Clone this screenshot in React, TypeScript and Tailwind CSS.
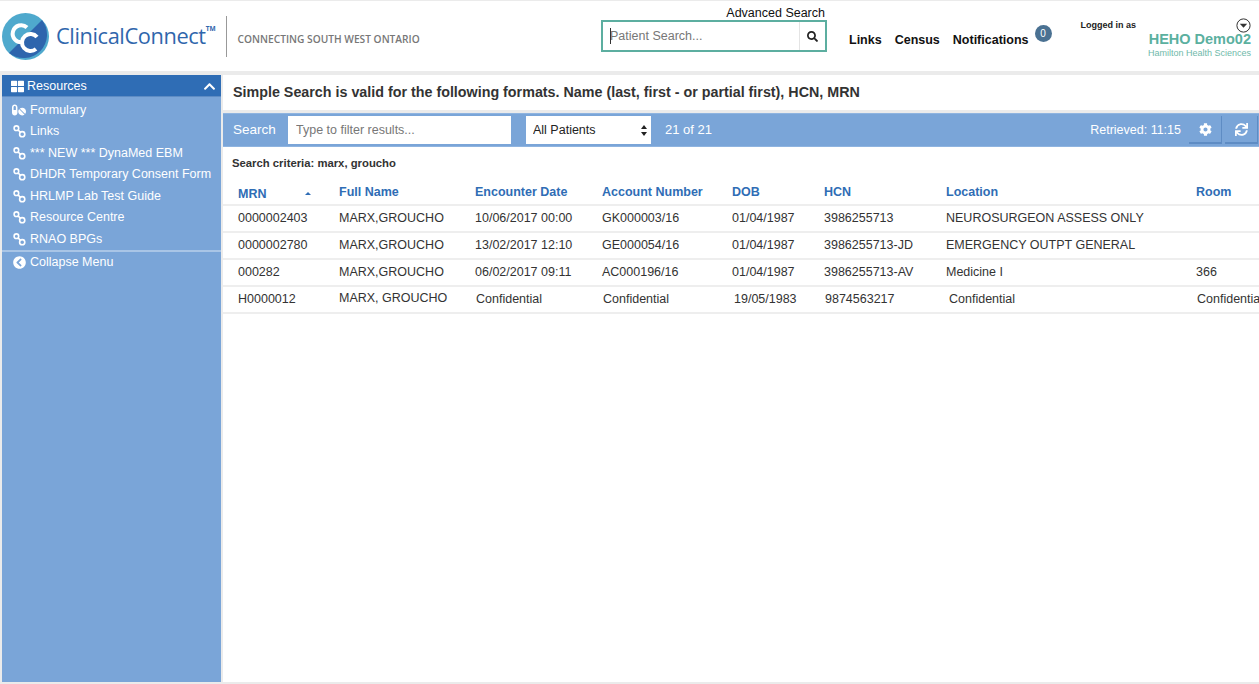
import React from 'react';
import { FaThLarge, FaChevronUp, FaPills, FaChevronCircleLeft, FaCog, FaSync, FaSearch } from 'react-icons/fa';

const columns = 'grid grid-cols-[101px_136px_127px_130px_92px_122px_250px_60px]';

const resources = [
  '*** NEW *** DynaMed EBM',
  'DHDR Temporary Consent Form',
  'HRLMP Lab Test Guide',
  'Resource Centre',
  'RNAO BPGs',
];

const rows = [
  ['0000002403', 'MARX,GROUCHO', '10/06/2017 00:00', 'GK000003/16', '01/04/1987', '3986255713', 'NEUROSURGEON ASSESS ONLY', ''],
  ['0000002780', 'MARX,GROUCHO', '13/02/2017 12:10', 'GE000054/16', '01/04/1987', '3986255713-JD', 'EMERGENCY OUTPT GENERAL', ''],
  ['000282', 'MARX,GROUCHO', '06/02/2017 09:11', 'AC000196/16', '01/04/1987', '3986255713-AV', 'Medicine I', '366'],
];

function ChainIcon() {
  return (
    <svg width="13" height="13" viewBox="0 0 13 13" fill="none" stroke="white" strokeWidth="1.6" className="shrink-0">
      <circle cx="3.4" cy="3.2" r="2.3" />
      <circle cx="9.2" cy="9.2" r="2.6" />
      <path d="M5 4.8 L7.4 7.4" />
    </svg>
  );
}

function Logo() {
  return (
    <svg width="47" height="47" viewBox="0 0 47 47" className="shrink-0">
      <circle cx="23.5" cy="23.5" r="23.5" fill="#4fa9cd" />
      <path d="M7 40 A23.5 23.5 0 0 0 40 7 Z" fill="#2e65ad" />
      <path d="M25 14.5 A8.5 8.5 0 1 0 21 29" fill="none" stroke="white" strokeWidth="4" />
      <path d="M35 24 A8.5 8.5 0 1 0 34 36" fill="none" stroke="white" strokeWidth="4" />
    </svg>
  );
}

function MenuItem({ label, icon }: { label: string; icon: React.ReactNode }) {
  return (
    <div className="flex h-[21.5px] items-center gap-[4px] pl-[10px] text-white">
      <span className="flex w-[14px] justify-center">{icon}</span>
      <span>{label}</span>
    </div>
  );
}

export default function App() {
  return (
    <div className="flex h-[684px] w-[1259px] flex-col overflow-hidden bg-[#ebebeb] font-['Liberation_Sans',Arial,sans-serif] text-[12.5px] text-[#333]">
      <header className="mt-px flex h-[70px] shrink-0 bg-white">
        <div className="flex w-[601px] shrink-0 items-start pl-[2px] pt-[12px]">
          <Logo />
          <div className="ml-[7px] mt-[8px] whitespace-nowrap font-['Open_Sans',sans-serif] text-[21.8px] font-medium leading-[30px] tracking-[-0.4px] text-[#2f66ac]">ClinicalConnect</div>
          <div className="mt-[11px] font-['Open_Sans',sans-serif] text-[6.5px] font-bold leading-[10px] text-[#2f66ac]">TM</div>
          <div className="ml-[10px] mt-[3px] h-[41px] w-px bg-[#999]"></div>
          <div className="ml-[11px] mt-[20px] whitespace-nowrap font-['Open_Sans',sans-serif] text-[10.2px] font-semibold leading-[13px] text-[#777]">CONNECTING SOUTH WEST ONTARIO</div>
        </div>

        <div className="flex w-[226px] shrink-0 flex-col">
          <div className="pr-[2px] pt-[5px] text-right text-[12.5px] leading-[14px] text-[#111]">Advanced Search</div>
          <div className="flex h-[32px] border-2 border-[#5caea0]">
            <div className="relative flex-1">
              <div className="absolute left-[7px] top-[6px] h-[16px] w-px bg-[#333]"></div>
              <input placeholder="Patient Search..." className="h-full w-full pl-[7px] text-[12.5px] outline-none placeholder:text-[#777]" />
            </div>
            <div className="flex w-[26px] items-center justify-center border-l border-[#e4e4e4] text-[#222]">
              <FaSearch size={11} />
            </div>
          </div>
        </div>

        <div className="ml-[22px] flex gap-[13px] pt-[32px] text-[12.5px] font-bold leading-[15px] text-[#111]">
          <span>Links</span>
          <span>Census</span>
          <span>Notifications</span>
        </div>
        <div className="ml-[6px] mt-[24px] flex h-[17px] w-[17px] items-center justify-center rounded-full bg-[#4a7192] text-[10px] text-white">0</div>

        <div className="ml-[29px] whitespace-nowrap pt-[19px] text-[9px] font-semibold leading-[11px] text-[#222]">Logged in as</div>
        <div className="ml-auto flex w-[110px] flex-col items-end pr-[8px] pt-[17px]">
          <svg width="15" height="15" viewBox="0 0 15 15" className="-mb-[2px]">
            <circle cx="7.5" cy="7.5" r="6.6" fill="white" stroke="#333" strokeWidth="1" />
            <path d="M3.8 5.8 H11.2 L7.5 9.8 Z" fill="#333" />
          </svg>
          <div className="text-[14.5px] font-bold leading-[16px] whitespace-nowrap text-[#5bb09f]">HEHO Demo02</div>
          <div className="mt-[1px] text-[9px] leading-[11px] whitespace-nowrap text-[#6fb9aa]">Hamilton Health Sciences</div>
        </div>
      </header>

      <div className="mt-[4px] flex min-h-0 flex-1 pb-[2px] pl-[2px]">
        <aside className="mr-[2px] flex w-[219px] shrink-0 flex-col bg-[#7aa5d8]">
          <div className="flex h-[22px] items-center justify-between border-b border-[#5e8cc4] bg-[#2f6db5] pl-[9px] pr-[5px] pt-[1px] text-white">
            <div className="flex items-center gap-[3px]">
              <FaThLarge size={13} />
              <span>Resources</span>
            </div>
            <FaChevronUp size={13} />
          </div>
          <div className="border-b-2 border-[#a9c5e6] pt-[2.5px]">
            <MenuItem label="Formulary" icon={<FaPills size={14} color="white" />} />
            <MenuItem label="Links" icon={<ChainIcon />} />
            {resources.map((label) => (
              <MenuItem key={label} label={label} icon={<ChainIcon />} />
            ))}
          </div>
          <MenuItem label="Collapse Menu" icon={<FaChevronCircleLeft size={13} color="white" />} />
        </aside>

        <main className="flex min-w-0 flex-1 flex-col">
          <div className="flex h-[35px] shrink-0 items-center bg-white pl-[10px] pt-[1px] text-[14.3px] font-bold text-[#333]">
            Simple Search is valid for the following formats. Name (last, first - or partial first), HCN, MRN
          </div>
          <div className="mt-[3px] flex h-[34px] shrink-0 items-center border-y border-[#8fb4e0] bg-[#7aa5d8] text-white">
            <span className="ml-[10px] w-[55px] text-[13.5px]">Search</span>
            <input placeholder="Type to filter results..." className="h-[28px] w-[223px] bg-white pl-[8px] text-[12.5px] text-[#333] outline-none placeholder:text-[#777]" />
            <div className="relative ml-[15px]">
              <select className="h-[28px] w-[125px] appearance-none rounded-none bg-white pl-[7px] text-[12.5px] text-[#222] outline-none">
                <option>All Patients</option>
              </select>
              <svg width="6" height="11" viewBox="0 0 6 11" className="absolute right-[4px] top-[9px]" fill="#222">
                <path d="M3 0 L6 4 H0 Z M3 11 L0 7 H6 Z" />
              </svg>
            </div>
            <span className="ml-[14px] text-[13px]">21 of 21</span>
            <span className="ml-auto text-[12.5px]">Retrieved: 11:15</span>
            <button className="ml-[8px] flex h-[28px] w-[33px] items-center justify-center border-b-2 border-r border-[#5e8cc4] bg-[#7aa5d8]">
              <FaCog size={13} color="white" />
            </button>
            <button className="ml-[3px] mr-px flex h-[28px] w-[33px] items-center justify-center border-b-2 border-r border-[#5e8cc4] bg-[#7aa5d8]">
              <FaSync size={13} color="white" />
            </button>
          </div>

          <section className="min-h-0 flex-1 overflow-hidden bg-white">
            <div className="pl-[9px] pt-[9px] text-[11.3px] leading-[14px] font-bold text-[#333]">Search criteria: marx, groucho</div>
            <div className={`${columns} mt-[11px] h-[25px] border-b-2 border-[#eee] pl-[15px] pt-[4px] font-bold leading-[15px] text-[#2f6db5]`}>
              <div className="flex w-[73px] items-center justify-between">
                <span>MRN</span>
                <svg width="6" height="3" viewBox="0 0 6 3" fill="#2f6db5" className="mb-[3px]">
                  <path d="M3 0 L6 3 H0 Z" />
                </svg>
              </div>
              <div>Full Name</div>
              <div>Encounter Date</div>
              <div>Account Number</div>
              <div>DOB</div>
              <div>HCN</div>
              <div>Location</div>
              <div>Room</div>
            </div>
            {rows.map((row) => (
              <div key={row[0]} className={`${columns} h-[27px] items-center border-b-2 border-[#eee] pl-[15px] text-[#333]`}>
                {row.map((cell, i) => (
                  <div key={i} className="whitespace-nowrap">{cell}</div>
                ))}
              </div>
            ))}
            <div className={`${columns} h-[27px] items-center border-b-2 border-[#eee] pl-[15px] text-[#333]`}>
              <div>H0000012</div>
              <div className="mb-[2px]">MARX, GROUCHO</div>
              <div className="pl-px">Confidential</div>
              <div className="pl-px">Confidential</div>
              <div className="pl-[2px]">19/05/1983</div>
              <div className="pl-px">9874563217</div>
              <div className="pl-[3px]">Confidential</div>
              <div className="whitespace-nowrap pl-px">Confidential</div>
            </div>
          </section>
        </main>
      </div>
    </div>
  );
}
